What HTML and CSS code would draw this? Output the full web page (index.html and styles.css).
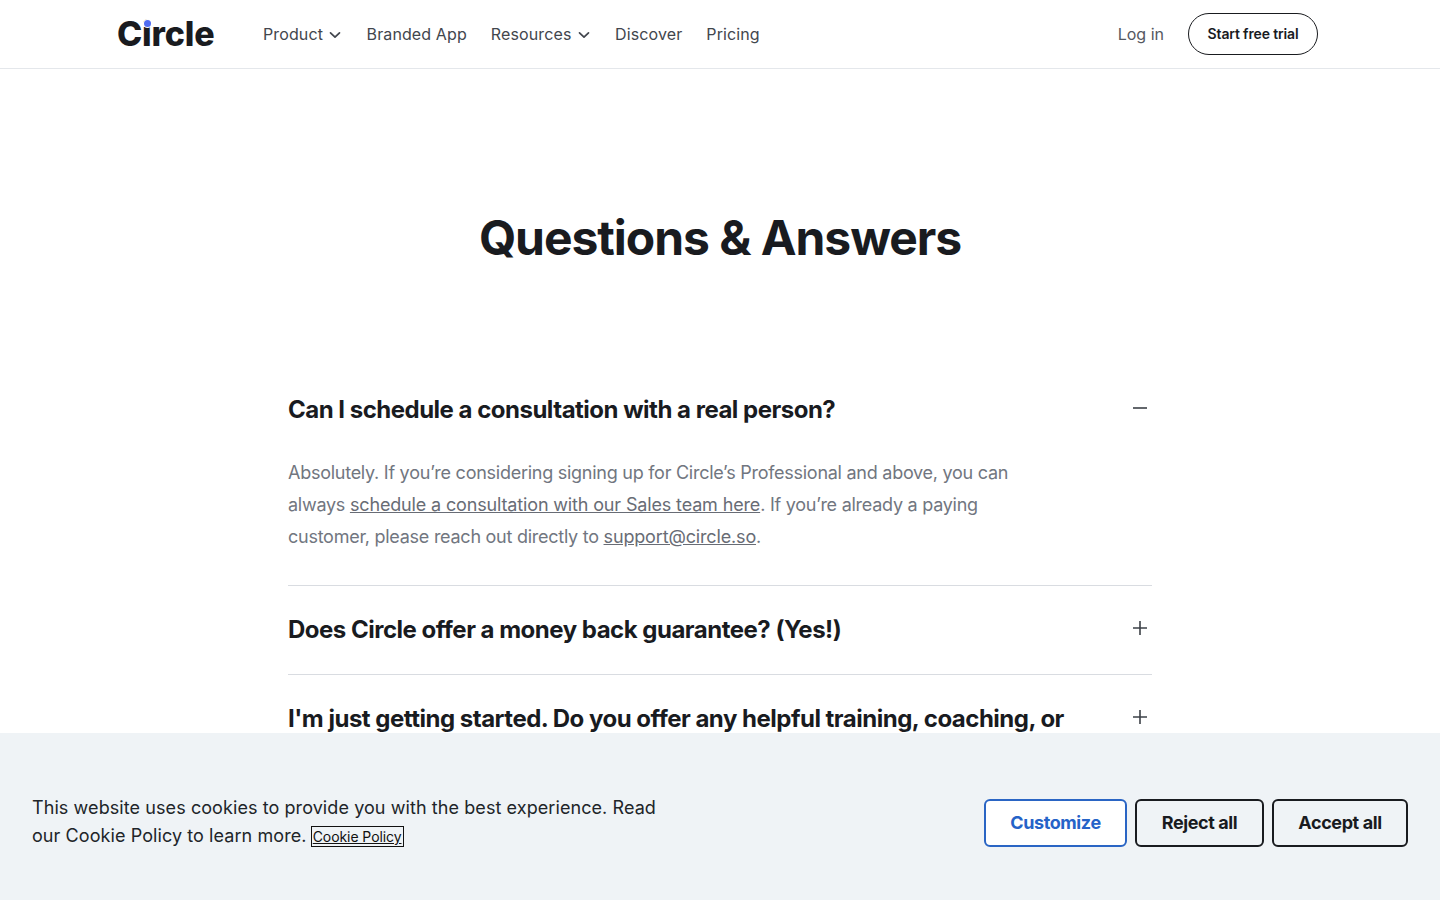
FILE: index.html
```html
<!DOCTYPE html>
<html lang="en">
<head>
<meta charset="utf-8">
<title>Circle - Questions &amp; Answers</title>
<link rel="stylesheet" href="styles.css">
</head>
<body>
<header class="site-header">
  <div class="header-inner">
    <a class="logo" href="#">C<span class="logo-i">i<span class="logo-dot"></span></span>rcle</a>
    <nav class="nav">
      <a class="nav-link" href="#">Product <svg class="chev" viewBox="0 0 12 8" width="12" height="8"><path d="M1.5 1.8 6 6.2l4.5-4.4" fill="none" stroke="currentColor" stroke-width="1.7" stroke-linecap="round" stroke-linejoin="round"/></svg></a>
      <a class="nav-link" href="#">Branded App</a>
      <a class="nav-link" href="#">Resources <svg class="chev" viewBox="0 0 12 8" width="12" height="8"><path d="M1.5 1.8 6 6.2l4.5-4.4" fill="none" stroke="currentColor" stroke-width="1.7" stroke-linecap="round" stroke-linejoin="round"/></svg></a>
      <a class="nav-link" href="#">Discover</a>
      <a class="nav-link" href="#">Pricing</a>
    </nav>
    <div class="header-actions">
      <a class="login" href="#">Log in</a>
      <a class="trial" href="#">Start free trial</a>
    </div>
  </div>
</header>

<main class="main">
  <h1 class="title">Questions &amp; Answers</h1>
  <section class="faq">
    <article class="faq-item">
      <div class="faq-head">
        <h2 class="faq-q">Can I schedule a consultation with a real person?</h2>
        <svg class="toggle" viewBox="0 0 16 16" width="16" height="16"><path d="M1 8h14" stroke="currentColor" stroke-width="1.6"/></svg>
      </div>
      <p class="faq-a">Absolutely. If you’re considering signing up for Circle’s Professional and above, you can always <a href="#">schedule a consultation with our Sales team here</a>. If you’re already a paying customer, please reach out directly to <a href="#">support@circle.so</a>.</p>
    </article>
    <article class="faq-item">
      <div class="faq-head">
        <h2 class="faq-q">Does Circle offer a money back guarantee? (Yes!)</h2>
        <svg class="toggle" viewBox="0 0 16 16" width="16" height="16"><path d="M1 8h14M8 1v14" stroke="currentColor" stroke-width="1.6"/></svg>
      </div>
    </article>
    <article class="faq-item">
      <div class="faq-head">
        <h2 class="faq-q">I'm just getting started. Do you offer any helpful training, coaching, or resources?</h2>
        <svg class="toggle" viewBox="0 0 16 16" width="16" height="16"><path d="M1 8h14M8 1v14" stroke="currentColor" stroke-width="1.6"/></svg>
      </div>
    </article>
  </section>
</main>

<aside class="cookie">
  <p class="cookie-text">This website uses cookies to provide you with the best experience. Read our Cookie Policy to learn more. <a class="cookie-link" href="#">Cookie Policy</a></p>
  <div class="cookie-actions">
    <button class="btn btn-primary">Customize</button>
    <button class="btn">Reject all</button>
    <button class="btn">Accept all</button>
  </div>
</aside>
</body>
</html>
```

FILE: styles.css
```css
* { box-sizing: border-box; }
html, body { margin: 0; padding: 0; }
body {
  font-family: Inter, "Liberation Sans", sans-serif;
  color: #191b1f;
  background: #fff;
  height: 900px;
  overflow: hidden;
}
a { color: inherit; text-decoration: none; }

.site-header { height: 69px; border-bottom: 1px solid #e4e7eb; }
.header-inner {
  width: 1200px;
  height: 68px;
  margin-left: 118px;
  display: flex;
  align-items: center;
}
.logo {
  font-size: 34px;
  font-weight: 800;
  letter-spacing: -0.2px;
  color: #191b1f;
  width: 145px;
  margin-left: -1px;
  margin-right: 1px;
  line-height: 40px;
}
.logo-i { position: relative; }
.logo-dot {
  position: absolute;
  left: 2px;
  top: 7px;
  width: 7px;
  height: 7px;
  border-radius: 50%;
  background: #506cf0;
  box-shadow: 0 0 0 1px #fff;
}
.nav { display: flex; gap: 24px; }
.nav-link {
  font-size: 16px;
  line-height: 24px;
  letter-spacing: 0.12px;
  color: #42464d;
  display: flex;
  align-items: center;
  gap: 6px;
}
.chev { display: block; margin-top: 1px; margin-right: 1.5px; }
.header-actions { margin-left: auto; display: flex; align-items: center; gap: 24px; }
.login { font-size: 16px; color: #545861; }
.trial {
  width: 130px;
  height: 42px;
  border: 1px solid #191b1f;
  border-radius: 21px;
  display: flex;
  align-items: center;
  justify-content: center;
  padding-bottom: 2px;
  font-size: 14px;
  font-weight: 600;
  letter-spacing: -0.15px;
  color: #191b1f;
}

.main { width: 864px; margin: 0 auto; }
.title {
  margin: 137px 0 0;
  text-align: center;
  font-size: 48px;
  line-height: 64px;
  font-weight: 700;
  letter-spacing: -1.05px;
  color: #191b1f;
}
.faq { margin-top: 99px; }
.faq-item { border-bottom: 1px solid #d9dce1; padding: 32px 0; }
.faq-item:first-child { padding: 29px 0 32px; }
.faq-head { display: flex; justify-content: space-between; align-items: flex-start; }
.faq-q {
  margin: 0;
  width: 800px;
  font-size: 24px;
  line-height: 24px;
  font-weight: 700;
  letter-spacing: -0.5px;
  color: #191b1f;
}
.toggle { color: #3d4148; margin-right: 4px; margin-top: 2px; flex: none; }
.faq-a {
  margin: 35px 0 0;
  width: 740px;
  font-size: 18px;
  line-height: 32px;
  letter-spacing: -0.26px;
  color: #717680;
}
.faq-a a { text-decoration: underline; color: #686c75; letter-spacing: -0.15px; }

.cookie {
  position: fixed;
  left: 0;
  right: 0;
  bottom: 0;
  height: 167px;
  background: #eff3f6;
  display: flex;
  align-items: center;
  justify-content: space-between;
  padding: 12px 32px 0;
}
.cookie-text {
  margin: 0;
  width: 640px;
  font-size: 18px;
  line-height: 28px;
  letter-spacing: 0.08px;
  color: #212529;
}
.cookie-link {
  font-size: 14px;
  letter-spacing: -0.08px;
  color: #111;
  text-decoration: underline;
  outline: 1px solid #111;
  outline-offset: 0;
  border: 1px solid transparent;
}
.cookie-actions { display: flex; gap: 8px; }
.btn {
  font-family: inherit;
  font-size: 18px;
  font-weight: 700;
  letter-spacing: -0.4px;
  height: 48px;
  width: 136px;
  padding: 0;
  background: transparent;
  border: 2px solid #191b1f;
  border-radius: 6px;
  color: #191b1f;
}
.btn:nth-child(2) { width: 129px; }
.btn-primary { width: 143px; background: #fff; border-color: #2a65c4; color: #2563c8; }
```
